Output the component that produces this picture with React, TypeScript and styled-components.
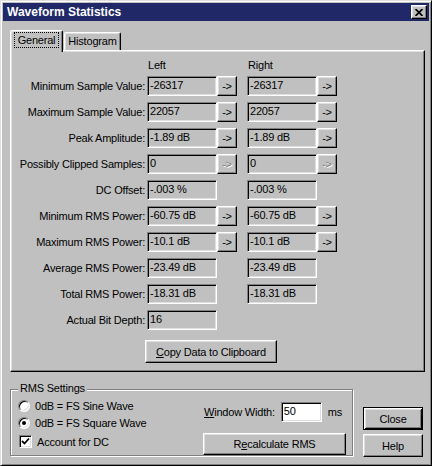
import React from "react";
import styled, { createGlobalStyle, css } from "styled-components";

const GlobalStyle = createGlobalStyle`
  html, body { margin: 0; padding: 0; background: #c0c0c0; }
  body {
    font-family: "Liberation Sans", Arial, sans-serif;
    font-size: 11px;
    letter-spacing: -0.2px;
    color: #000;
  }
  * { box-sizing: border-box; }
`;

const raised = css`
  border: 1px solid;
  border-color: #fff #000 #000 #fff;
  box-shadow: inset -1px -1px 0 #808080, inset 1px 1px 0 #dfdfdf;
`;

const sunken = css`
  border: 1px solid;
  border-color: #808080 #fff #fff #808080;
  box-shadow: inset 1px 1px 0 #000, inset -1px -1px 0 #dfdfdf;
`;

const Window = styled.div`
  width: 432px;
  height: 466px;
  background: #c0c0c0;
  border: 1px solid;
  border-color: #dfdfdf #000 #000 #dfdfdf;
  box-shadow: inset 1px 1px 0 #fff, inset -1px -1px 0 #808080;
  padding: 2px;
  display: flex;
  flex-direction: column;
`;

const TitleBar = styled.div`
  height: 18px;
  background: #202868;
  color: #fff;
  display: flex;
  align-items: center;
  justify-content: space-between;
  padding: 0 2px 0 4px;
  font-weight: bold;
  font-size: 12px;
  letter-spacing: 0;
`;

const TitleClose = styled.div`
  ${raised};
  width: 16px;
  height: 14px;
  background: #c0c0c0;
  display: flex;
  align-items: center;
  justify-content: center;
`;

const Content = styled.div`
  padding: 9px 4px 0 7px;
  display: flex;
  flex-direction: column;
`;

const TabStrip = styled.div`
  height: 20px;
  display: flex;
  align-items: flex-start;
  position: relative;
  z-index: 2;
`;

const Tab = styled.div<{ $active?: boolean; $w: number }>`
  width: ${(p) => p.$w}px;
  height: ${(p) => (p.$active ? 22 : 18)}px;
  margin-top: ${(p) => (p.$active ? 0 : 2)}px;
  margin-left: ${(p) => (p.$active ? 0 : 1)}px;
  background: #c0c0c0;
  border-top: 1px solid #fff;
  border-left: 1px solid #fff;
  border-right: 1px solid #000;
  border-radius: 2px 2px 0 0;
  box-shadow: inset -1px 0 0 #808080, inset 1px 1px 0 #dfdfdf;
  display: flex;
  justify-content: center;
  align-items: flex-start;
  padding-top: ${(p) => (p.$active ? 1 : 2)}px;
`;

const FocusLabel = styled.span`
  border: 1px dotted #000;
  padding: 1px 3px;
  line-height: 12px;
`;

const TabLabel = styled.span`
  line-height: 13px;
`;

const TabPanel = styled.div`
  height: 322px;
  border: 1px solid;
  border-color: #fff #000 #000 #fff;
  box-shadow: inset -1px -1px 0 #808080, inset 1px 1px 0 #dfdfdf;
  padding-top: 8px;
  display: flex;
  flex-direction: column;
`;

const HeaderRow = styled.div`
  display: flex;
  height: 13px;
  line-height: 13px;
  margin-bottom: 4px;
  padding-left: 137px;
`;

const HeaderCell = styled.div`
  width: 100px;
`;

const Rows = styled.div`
  display: flex;
  flex-direction: column;
  gap: 6px;
`;

const Row = styled.div`
  display: flex;
  align-items: center;
  height: 20px;
`;

const Label = styled.div`
  width: 134px;
  margin-right: 2px;
  text-align: right;
  white-space: nowrap;
`;

const Field = styled.div<{ $white?: boolean; $w?: number }>`
  ${sunken};
  width: ${(p) => p.$w ?? 70}px;
  height: 20px;
  background: ${(p) => (p.$white ? "#fff" : "#c0c0c0")};
  padding: 0 1px 0 2px;
  line-height: 16px;
  white-space: nowrap;
  overflow: hidden;
`;

const ArrowButton = styled.div<{ $disabled?: boolean }>`
  ${raised};
  width: 20px;
  height: 20px;
  display: flex;
  align-items: center;
  justify-content: center;
  color: ${(p) => (p.$disabled ? "#808080" : "#000")};
  text-shadow: ${(p) => (p.$disabled ? "1px 1px 0 #fff" : "none")};
`;

const Slot = styled.div`
  width: 20px;
  height: 20px;
`;

const Gap = styled.div`
  width: 10px;
`;

const Button = styled.div<{ $w: number; $default?: boolean }>`
  width: ${(p) => p.$w}px;
  height: 23px;
  display: flex;
  align-items: center;
  justify-content: center;
  white-space: nowrap;
  ${(p) =>
    p.$default
      ? css`
          border: 1px solid #000;
          box-shadow: inset 1px 1px 0 #fff, inset -1px -1px 0 #000,
            inset 2px 2px 0 #dfdfdf, inset -2px -2px 0 #808080;
        `
      : raised};
`;

const CopyButton = styled(Button)`
  margin: 10px 0 0 134px;
`;

const RecalcButton = styled(Button)`
  margin-top: 11px;
`;

const BottomRow = styled.div`
  display: flex;
  gap: 10px;
`;

const GroupBox = styled.div`
  position: relative;
  margin-top: 17px;
  width: 343px;
  height: 67px;
  border: 1px solid #808080;
  box-shadow: inset 1px 1px 0 #fff, 1px 1px 0 #fff;
  display: flex;
  padding: 7px 6px 0 7px;
`;

const Legend = styled.span`
  position: absolute;
  top: -8px;
  left: 7px;
  padding: 0 2px;
  line-height: 13px;
  background: #c0c0c0;
`;

const Options = styled.div`
  display: flex;
  flex-direction: column;
`;

const Option = styled.div<{ $gap?: number }>`
  display: flex;
  align-items: center;
  height: 17px;
  gap: 5px;
  margin-top: ${(p) => p.$gap ?? 0}px;
`;

const Radio = styled.span<{ $checked?: boolean }>`
  position: relative;
  width: 12px;
  height: 12px;
  border-radius: 50%;
  background: #fff;
  border: 1px solid;
  border-color: #808080 #fff #fff #808080;
  box-shadow: inset 1px 1px 0 #000, inset -1px -1px 0 #dfdfdf;
  &::after {
    content: "";
    display: ${(p) => (p.$checked ? "block" : "none")};
    position: absolute;
    width: 4px;
    height: 4px;
    left: 3px;
    top: 3px;
    border-radius: 50%;
    background: #000;
  }
`;

const CheckBox = styled.span`
  ${sunken};
  width: 13px;
  height: 13px;
  margin-left: 1px;
  background: #fff;
  display: flex;
  align-items: center;
  justify-content: center;
`;

const RightSide = styled.div`
  margin-left: auto;
  width: 143px;
  padding-top: 5px;
  display: flex;
  flex-direction: column;
`;

const WidthRow = styled.div`
  display: flex;
  align-items: center;
  height: 20px;
  padding-left: 1px;
  gap: 6px;
`;

const ButtonColumn = styled.div`
  margin-top: 35px;
  display: flex;
  flex-direction: column;
  gap: 4px;
`;

type Arrows = "on" | "off" | "none";

const rows: { label: string; left: string; right?: string; arrows: Arrows }[] = [
  { label: "Minimum Sample Value:", left: "-26317", right: "-26317", arrows: "on" },
  { label: "Maximum Sample Value:", left: "22057", right: "22057", arrows: "on" },
  { label: "Peak Amplitude:", left: "-1.89 dB", right: "-1.89 dB", arrows: "on" },
  { label: "Possibly Clipped Samples:", left: "0", right: "0", arrows: "off" },
  { label: "DC Offset:", left: "-.003 %", right: "-.003 %", arrows: "none" },
  { label: "Minimum RMS Power:", left: "-60.75 dB", right: "-60.75 dB", arrows: "on" },
  { label: "Maximum RMS Power:", left: "-10.1 dB", right: "-10.1 dB", arrows: "on" },
  { label: "Average RMS Power:", left: "-23.49 dB", right: "-23.49 dB", arrows: "none" },
  { label: "Total RMS Power:", left: "-18.31 dB", right: "-18.31 dB", arrows: "none" },
  { label: "Actual Bit Depth:", left: "16", arrows: "none" },
];

const Arrow = ({ kind }: { kind: Arrows }) =>
  kind === "none" ? <Slot /> : <ArrowButton $disabled={kind === "off"}>-&gt;</ArrowButton>;

const App: React.FC = () => (
  <>
    <GlobalStyle />
    <Window>
      <TitleBar>
        <span>Waveform Statistics</span>
        <TitleClose>
          <svg width="8" height="7" viewBox="0 0 8 7">
            <path d="M0.5 0 L7.5 7 M7.5 0 L0.5 7" stroke="#000" strokeWidth="1.7" />
          </svg>
        </TitleClose>
      </TitleBar>
      <Content>
        <TabStrip>
          <Tab $active $w={53}>
            <FocusLabel>General</FocusLabel>
          </Tab>
          <Tab $w={57}>
            <TabLabel>Histogram</TabLabel>
          </Tab>
        </TabStrip>
        <TabPanel>
          <HeaderRow>
            <HeaderCell>Left</HeaderCell>
            <HeaderCell>Right</HeaderCell>
          </HeaderRow>
          <Rows>
            {rows.map((r) => (
              <Row key={r.label}>
                <Label>{r.label}</Label>
                <Field>{r.left}</Field>
                {r.right !== undefined && (
                  <>
                    <Arrow kind={r.arrows} />
                    <Gap />
                    <Field>{r.right}</Field>
                    <Arrow kind={r.arrows} />
                  </>
                )}
              </Row>
            ))}
          </Rows>
          <CopyButton $w={132}>
            <span>
              <u>C</u>opy Data to Clipboard
            </span>
          </CopyButton>
        </TabPanel>
        <BottomRow>
          <GroupBox>
            <Legend>RMS Settings</Legend>
            <Options>
              <Option>
                <Radio />
                <span>0dB = FS Sine Wave</span>
              </Option>
              <Option>
                <Radio $checked />
                <span>0dB = FS Square Wave</span>
              </Option>
              <Option $gap={2}>
                <CheckBox>
                  <svg width="9" height="9" viewBox="0 0 9 9">
                    <path d="M1 4 L3.5 6.5 L8 1.5" fill="none" stroke="#000" strokeWidth="1.8" />
                  </svg>
                </CheckBox>
                <span>Account for DC</span>
              </Option>
            </Options>
            <RightSide>
              <WidthRow>
                <span>
                  <u>W</u>indow Width:
                </span>
                <Field $white $w={41}>
                  50
                </Field>
                <span>ms</span>
              </WidthRow>
              <RecalcButton $w={143}>
                <span>
                  R<u>e</u>calculate RMS
                </span>
              </RecalcButton>
            </RightSide>
          </GroupBox>
          <ButtonColumn>
            <Button $w={60} $default>
              Close
            </Button>
            <Button $w={60}>Help</Button>
          </ButtonColumn>
        </BottomRow>
      </Content>
    </Window>
  </>
);

export default App;
